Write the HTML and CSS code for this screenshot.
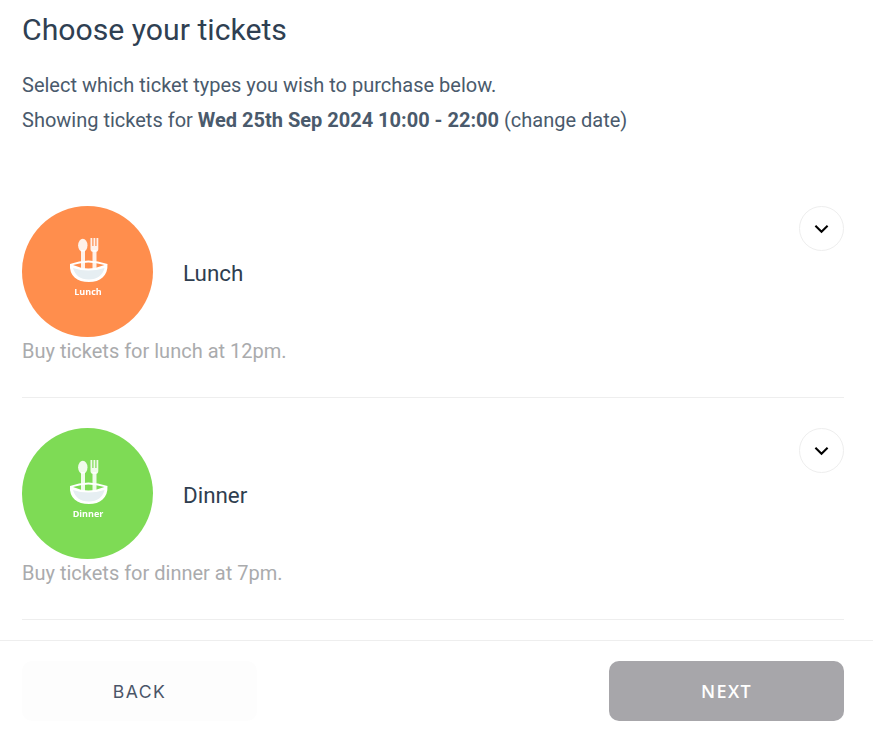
FILE: index.html
```html
<!DOCTYPE html>
<html lang="en">

<head>
    <meta charset="UTF-8">
    <meta name="viewport" content="width=device-width, initial-scale=1.0">
    <title>Choose your tickets</title>
    <link rel="stylesheet" href="styles.css">
</head>

<body>
    <div class="content">
        <h1 class="title">Choose your tickets</h1>
        <p class="intro">Select which ticket types you wish to purchase below.</p>
        <p class="intro">Showing tickets for <b>Wed 25th Sep 2024 10:00 - 22:00</b> (change date)</p>

        <div class="tickets">
            <div class="ticket">
                <div class="ticket__head">
                    <svg class="ticket__logo ticket__logo--lunch" viewBox="0 0 131 131">
                        <circle class="logo__bg" cx="65.5" cy="65.5" r="65.5" />
                        <g class="bowl">
                            <path class="bowl__rim" d="M48 58Q66 51 85.500 58C86 70 78 76 67 76 55 76 47 70 48 58z" />
                            <path class="bowl__gap" d="M51 59Q66 54 82.500 59 66 66 51 59z" />
                            <path class="bowl__inner" d="M51 62Q66 67 82.500 62C81 69 75 73.500 67 73.500 58 73.500 53 69 51 62z" />
                            <path class="bowl__cutlery" d="M59 44h4v20h-4zM70.500 44h4v20h-4z" />
                            <ellipse class="bowl__cutlery" cx="60.800" cy="39.300" rx="4.700" ry="6.500" />
                            <path class="bowl__cutlery" d="M68.500 32h1.800v8h1.200v-8h1.800v8h1.200v-8h1.800v11q0 3-3 3h-1.800q-3 0-3-3z" />
                        </g>
                        <text class="logo__text" x="66" y="89">Lunch</text>
                    </svg>
                    <span class="ticket__name">Lunch</span>
                    <button class="toggle">
                        <svg viewBox="0 0 16 10" width="15" height="10">
                            <path d="M1.500 1.500 8 8l6.500-6.500" />
                        </svg>
                    </button>
                </div>
                <p class="ticket__desc">Buy tickets for lunch at 12pm.</p>
            </div>

            <div class="ticket">
                <div class="ticket__head">
                    <svg class="ticket__logo ticket__logo--dinner" viewBox="0 0 131 131">
                        <circle class="logo__bg" cx="65.5" cy="65.5" r="65.5" />
                        <g class="bowl">
                            <path class="bowl__rim" d="M48 58Q66 51 85.500 58C86 70 78 76 67 76 55 76 47 70 48 58z" />
                            <path class="bowl__gap" d="M51 59Q66 54 82.500 59 66 66 51 59z" />
                            <path class="bowl__inner" d="M51 62Q66 67 82.500 62C81 69 75 73.500 67 73.500 58 73.500 53 69 51 62z" />
                            <path class="bowl__cutlery" d="M59 44h4v20h-4zM70.500 44h4v20h-4z" />
                            <ellipse class="bowl__cutlery" cx="60.800" cy="39.300" rx="4.700" ry="6.500" />
                            <path class="bowl__cutlery" d="M68.500 32h1.800v8h1.200v-8h1.800v8h1.200v-8h1.800v11q0 3-3 3h-1.800q-3 0-3-3z" />
                        </g>
                        <text class="logo__text" x="66" y="89">Dinner</text>
                    </svg>
                    <span class="ticket__name">Dinner</span>
                    <button class="toggle">
                        <svg viewBox="0 0 16 10" width="15" height="10">
                            <path d="M1.500 1.500 8 8l6.500-6.500" />
                        </svg>
                    </button>
                </div>
                <p class="ticket__desc">Buy tickets for dinner at 7pm.</p>
            </div>
        </div>
    </div>

    <div class="footer">
        <button class="btn btn--back">BACK</button>
        <button class="btn btn--next">NEXT</button>
    </div>
</body>

</html>
```

FILE: styles.css
```css
* {
    box-sizing: border-box;
}

body {
    margin: 0;
    height: 737px;
    overflow: hidden;
    background: #fff;
    font-family: Roboto, sans-serif;
    color: #4a5a6c;
}

.content {
    height: 640px;
    overflow: hidden;
    padding: 11px 29px 0 22px;
}

.title {
    margin: 0 0 19px;
    font-size: 30.2px;
    line-height: 38px;
    font-weight: 400;
    color: #2f4052;
}

.intro {
    margin: 0;
    font-size: 20px;
    line-height: 35px;
}

.intro b {
    font-weight: 700;
}

.tickets {
    margin-top: 68px;
}

.ticket {
    padding-bottom: 36px;
    margin-bottom: 30px;
    border-bottom: 1px solid #eeeeee;
}

.ticket__head {
    display: flex;
    align-items: flex-start;
}

.ticket__logo {
    width: 131px;
    height: 131px;
    flex: none;
}

.ticket__logo--lunch {
    --logo-color: #ff8e4d;
}

.ticket__logo--dinner {
    --logo-color: #7edb55;
}

.logo__bg,
.bowl__gap {
    fill: var(--logo-color);
}

.bowl {
    filter: blur(0.7px);
}

.bowl__rim {
    fill: #fff;
}

.bowl__cutlery {
    fill: #fff;
    opacity: 0.88;
}

.bowl__inner {
    fill: #e6eef2;
}

.logo__text {
    fill: #fff;
    font-family: "Open Sans", sans-serif;
    font-size: 9px;
    font-weight: 700;
    text-anchor: middle;
    filter: blur(0.5px);
}

.ticket__name {
    margin-left: 30px;
    font-size: 22.4px;
    line-height: 135px;
    color: #2f3e50;
}

.toggle {
    display: flex;
    align-items: center;
    justify-content: center;
    width: 45px;
    height: 45px;
    margin-left: auto;
    padding: 0;
    border: 1px solid #eeeeee;
    border-radius: 50%;
    background: #fff;
}

.toggle path {
    fill: none;
    stroke: #000;
    stroke-width: 2.2;
}

.ticket__desc {
    margin: 0;
    font-size: 20px;
    line-height: 20px;
    color: #aaabad;
}

.footer {
    display: flex;
    justify-content: space-between;
    height: 97px;
    padding: 20px 29px 0 22px;
    border-top: 1px solid #eeeeee;
}

.btn {
    width: 235px;
    height: 60px;
    border: 0;
    border-radius: 10px;
    letter-spacing: 1.4px;
}

.btn--back {
    padding-top: 2px;
    background: #fdfdfd;
    color: #4a5568;
    font-family: Inter, sans-serif;
    font-size: 17.6px;
}

.btn--next {
    padding-bottom: 2px;
    background: #a7a6aa;
    color: #fff;
    font-family: "Open Sans", sans-serif;
    font-size: 18px;
    font-weight: 600;
}
```
